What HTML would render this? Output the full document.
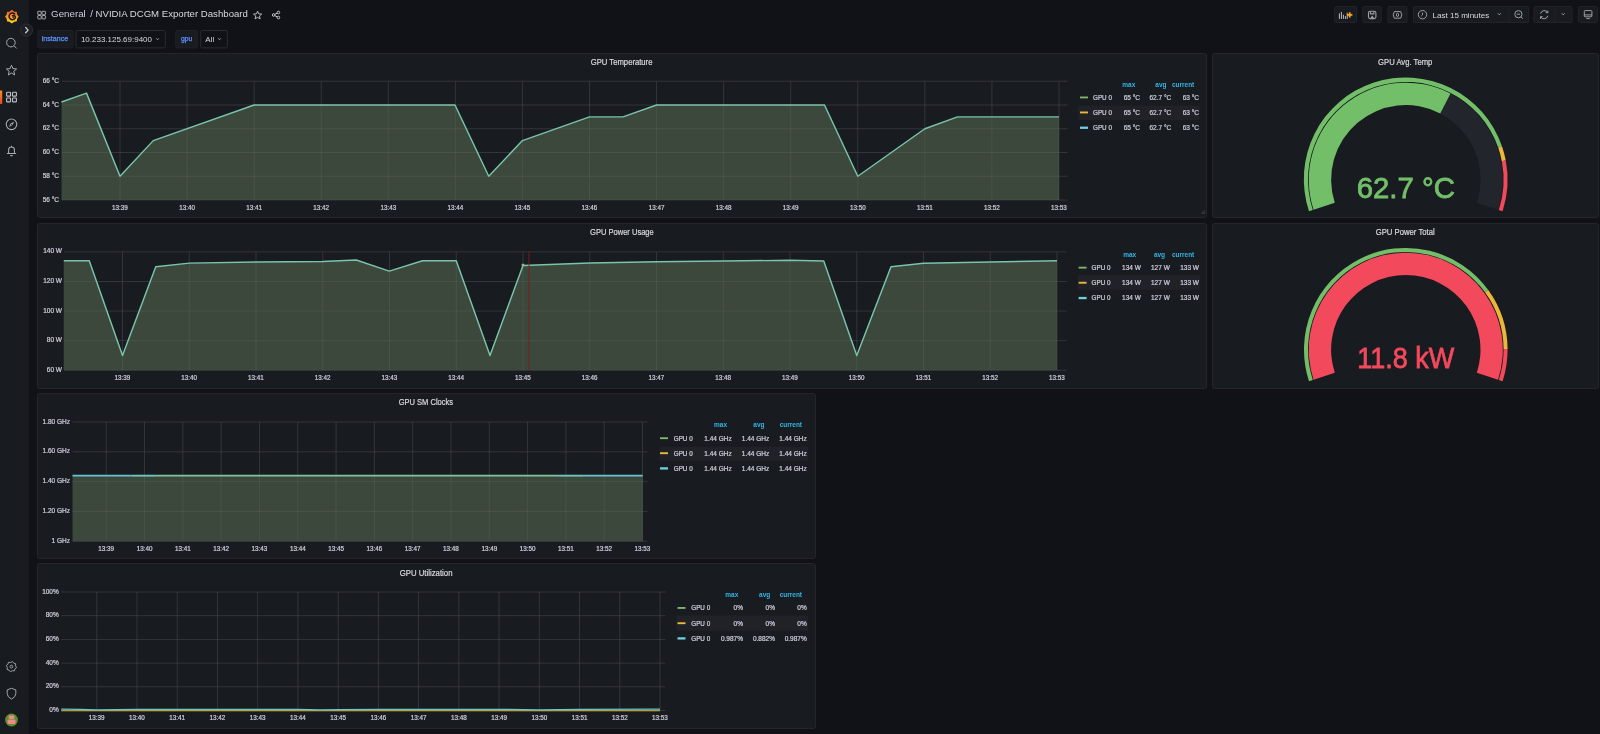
<!DOCTYPE html>
<html><head><meta charset="utf-8"><style>
html,body{margin:0;padding:0;width:1600px;height:734px;overflow:hidden;background:#111217;font-family:"Liberation Sans", sans-serif;}
</style></head><body>
<svg width="1600" height="734" viewBox="0 0 1600 734" style="position:absolute;left:0;top:0;will-change:transform" font-family='"Liberation Sans", sans-serif'><rect x="0" y="0" width="28" height="734" fill="#181b1f"/><line x1="28.5" y1="0" x2="28.5" y2="734" stroke="#16181c"/><rect x="37.5" y="53.5" width="1169" height="164" rx="2" fill="#181b1f" stroke="#24262b" stroke-width="1"/><text x="621.6" y="64.6" font-size="8.4" fill="#d8d9e0" text-anchor="middle" font-weight="normal" textLength="61.7" lengthAdjust="spacingAndGlyphs" stroke="#d8d9e0" stroke-width="0.2">GPU Temperature</text><rect x="1212.5" y="53.5" width="386" height="164" rx="2" fill="#181b1f" stroke="#24262b" stroke-width="1"/><text x="1405.2" y="64.8" font-size="8.4" fill="#d8d9e0" text-anchor="middle" font-weight="normal" textLength="54.3" lengthAdjust="spacingAndGlyphs" stroke="#d8d9e0" stroke-width="0.2">GPU Avg. Temp</text><rect x="37.5" y="223.5" width="1169" height="165" rx="2" fill="#181b1f" stroke="#24262b" stroke-width="1"/><text x="621.9" y="234.7" font-size="8.4" fill="#d8d9e0" text-anchor="middle" font-weight="normal" textLength="63.7" lengthAdjust="spacingAndGlyphs" stroke="#d8d9e0" stroke-width="0.2">GPU Power Usage</text><rect x="1212.5" y="223.5" width="386" height="165" rx="2" fill="#181b1f" stroke="#24262b" stroke-width="1"/><text x="1405.2" y="235" font-size="8.4" fill="#d8d9e0" text-anchor="middle" font-weight="normal" textLength="59" lengthAdjust="spacingAndGlyphs" stroke="#d8d9e0" stroke-width="0.2">GPU Power Total</text><rect x="37.5" y="393.5" width="778" height="165" rx="2" fill="#181b1f" stroke="#24262b" stroke-width="1"/><text x="425.9" y="405.4" font-size="8.4" fill="#d8d9e0" text-anchor="middle" font-weight="normal" textLength="54.4" lengthAdjust="spacingAndGlyphs" stroke="#d8d9e0" stroke-width="0.2">GPU SM Clocks</text><rect x="37.5" y="563.5" width="778" height="165" rx="2" fill="#181b1f" stroke="#24262b" stroke-width="1"/><text x="426.1" y="575.6" font-size="8.4" fill="#d8d9e0" text-anchor="middle" font-weight="normal" textLength="52.8" lengthAdjust="spacingAndGlyphs" stroke="#d8d9e0" stroke-width="0.2">GPU Utilization</text><path d="M1203.5,214 L1205,212.5 M1201.5,214 L1205,210.5" stroke="#6b6d75" stroke-width="0.6"/><line x1="62" y1="81.25" x2="1067.5" y2="81.25" stroke="#27292e" stroke-width="1"/><line x1="62" y1="105.0" x2="1067.5" y2="105.0" stroke="#27292e" stroke-width="1"/><line x1="62" y1="128.75" x2="1067.5" y2="128.75" stroke="#27292e" stroke-width="1"/><line x1="62" y1="152.5" x2="1067.5" y2="152.5" stroke="#27292e" stroke-width="1"/><line x1="62" y1="176.25" x2="1067.5" y2="176.25" stroke="#27292e" stroke-width="1"/><line x1="62" y1="200.0" x2="1067.5" y2="200.0" stroke="#27292e" stroke-width="1"/><line x1="120.0" y1="81.25" x2="120.0" y2="200.0" stroke="#27292e" stroke-width="1"/><line x1="187.07142857142856" y1="81.25" x2="187.07142857142856" y2="200.0" stroke="#27292e" stroke-width="1"/><line x1="254.14285714285714" y1="81.25" x2="254.14285714285714" y2="200.0" stroke="#27292e" stroke-width="1"/><line x1="321.2142857142857" y1="81.25" x2="321.2142857142857" y2="200.0" stroke="#27292e" stroke-width="1"/><line x1="388.2857142857143" y1="81.25" x2="388.2857142857143" y2="200.0" stroke="#27292e" stroke-width="1"/><line x1="455.35714285714283" y1="81.25" x2="455.35714285714283" y2="200.0" stroke="#27292e" stroke-width="1"/><line x1="522.4285714285714" y1="81.25" x2="522.4285714285714" y2="200.0" stroke="#27292e" stroke-width="1"/><line x1="589.5" y1="81.25" x2="589.5" y2="200.0" stroke="#27292e" stroke-width="1"/><line x1="656.5714285714286" y1="81.25" x2="656.5714285714286" y2="200.0" stroke="#27292e" stroke-width="1"/><line x1="723.6428571428571" y1="81.25" x2="723.6428571428571" y2="200.0" stroke="#27292e" stroke-width="1"/><line x1="790.7142857142857" y1="81.25" x2="790.7142857142857" y2="200.0" stroke="#27292e" stroke-width="1"/><line x1="857.7857142857142" y1="81.25" x2="857.7857142857142" y2="200.0" stroke="#27292e" stroke-width="1"/><line x1="924.8571428571429" y1="81.25" x2="924.8571428571429" y2="200.0" stroke="#27292e" stroke-width="1"/><line x1="991.9285714285714" y1="81.25" x2="991.9285714285714" y2="200.0" stroke="#27292e" stroke-width="1"/><line x1="1059.0" y1="81.25" x2="1059.0" y2="200.0" stroke="#27292e" stroke-width="1"/><polygon points="61.50,200.0 61.50,102.03 86.50,93.12 120.00,176.25 153.25,140.62 254.14,105.00 455.00,105.00 488.75,176.25 522.43,140.62 589.50,116.88 623.00,116.88 656.57,105.00 824.50,105.00 857.79,176.25 924.86,128.75 957.50,116.88 1059.00,116.88 1059.00,200.0" fill="#3d483c"/><line x1="62" y1="81.25" x2="1067.5" y2="81.25" stroke="rgba(204,204,220,0.08)" stroke-width="1"/><line x1="62" y1="105.0" x2="1067.5" y2="105.0" stroke="rgba(204,204,220,0.08)" stroke-width="1"/><line x1="62" y1="128.75" x2="1067.5" y2="128.75" stroke="rgba(204,204,220,0.08)" stroke-width="1"/><line x1="62" y1="152.5" x2="1067.5" y2="152.5" stroke="rgba(204,204,220,0.08)" stroke-width="1"/><line x1="62" y1="176.25" x2="1067.5" y2="176.25" stroke="rgba(204,204,220,0.08)" stroke-width="1"/><line x1="62" y1="200.0" x2="1067.5" y2="200.0" stroke="rgba(204,204,220,0.08)" stroke-width="1"/><line x1="120.0" y1="81.25" x2="120.0" y2="200.0" stroke="rgba(204,204,220,0.08)" stroke-width="1"/><line x1="187.07142857142856" y1="81.25" x2="187.07142857142856" y2="200.0" stroke="rgba(204,204,220,0.08)" stroke-width="1"/><line x1="254.14285714285714" y1="81.25" x2="254.14285714285714" y2="200.0" stroke="rgba(204,204,220,0.08)" stroke-width="1"/><line x1="321.2142857142857" y1="81.25" x2="321.2142857142857" y2="200.0" stroke="rgba(204,204,220,0.08)" stroke-width="1"/><line x1="388.2857142857143" y1="81.25" x2="388.2857142857143" y2="200.0" stroke="rgba(204,204,220,0.08)" stroke-width="1"/><line x1="455.35714285714283" y1="81.25" x2="455.35714285714283" y2="200.0" stroke="rgba(204,204,220,0.08)" stroke-width="1"/><line x1="522.4285714285714" y1="81.25" x2="522.4285714285714" y2="200.0" stroke="rgba(204,204,220,0.08)" stroke-width="1"/><line x1="589.5" y1="81.25" x2="589.5" y2="200.0" stroke="rgba(204,204,220,0.08)" stroke-width="1"/><line x1="656.5714285714286" y1="81.25" x2="656.5714285714286" y2="200.0" stroke="rgba(204,204,220,0.08)" stroke-width="1"/><line x1="723.6428571428571" y1="81.25" x2="723.6428571428571" y2="200.0" stroke="rgba(204,204,220,0.08)" stroke-width="1"/><line x1="790.7142857142857" y1="81.25" x2="790.7142857142857" y2="200.0" stroke="rgba(204,204,220,0.08)" stroke-width="1"/><line x1="857.7857142857142" y1="81.25" x2="857.7857142857142" y2="200.0" stroke="rgba(204,204,220,0.08)" stroke-width="1"/><line x1="924.8571428571429" y1="81.25" x2="924.8571428571429" y2="200.0" stroke="rgba(204,204,220,0.08)" stroke-width="1"/><line x1="991.9285714285714" y1="81.25" x2="991.9285714285714" y2="200.0" stroke="rgba(204,204,220,0.08)" stroke-width="1"/><line x1="1059.0" y1="81.25" x2="1059.0" y2="200.0" stroke="rgba(204,204,220,0.08)" stroke-width="1"/><polyline points="61.50,102.03 86.50,93.12 120.00,176.25 153.25,140.62 254.14,105.00 455.00,105.00 488.75,176.25 522.43,140.62 589.50,116.88 623.00,116.88 656.57,105.00 824.50,105.00 857.79,176.25 924.86,128.75 957.50,116.88 1059.00,116.88" fill="none" stroke="#79c4aa" stroke-width="1.45" stroke-linejoin="round"/><text x="59" y="82.75" font-size="6.5" fill="#ccccdc" text-anchor="end" font-weight="normal" stroke="#ccccdc" stroke-width="0.22">66 °C</text><text x="59" y="106.5" font-size="6.5" fill="#ccccdc" text-anchor="end" font-weight="normal" stroke="#ccccdc" stroke-width="0.22">64 °C</text><text x="59" y="130.25" font-size="6.5" fill="#ccccdc" text-anchor="end" font-weight="normal" stroke="#ccccdc" stroke-width="0.22">62 °C</text><text x="59" y="154.0" font-size="6.5" fill="#ccccdc" text-anchor="end" font-weight="normal" stroke="#ccccdc" stroke-width="0.22">60 °C</text><text x="59" y="177.75" font-size="6.5" fill="#ccccdc" text-anchor="end" font-weight="normal" stroke="#ccccdc" stroke-width="0.22">58 °C</text><text x="59" y="201.5" font-size="6.5" fill="#ccccdc" text-anchor="end" font-weight="normal" stroke="#ccccdc" stroke-width="0.22">56 °C</text><text x="120.0" y="209.8" font-size="6.3" fill="#ccccdc" text-anchor="middle" font-weight="normal" stroke="#ccccdc" stroke-width="0.22">13:39</text><text x="187.07142857142856" y="209.8" font-size="6.3" fill="#ccccdc" text-anchor="middle" font-weight="normal" stroke="#ccccdc" stroke-width="0.22">13:40</text><text x="254.14285714285714" y="209.8" font-size="6.3" fill="#ccccdc" text-anchor="middle" font-weight="normal" stroke="#ccccdc" stroke-width="0.22">13:41</text><text x="321.2142857142857" y="209.8" font-size="6.3" fill="#ccccdc" text-anchor="middle" font-weight="normal" stroke="#ccccdc" stroke-width="0.22">13:42</text><text x="388.2857142857143" y="209.8" font-size="6.3" fill="#ccccdc" text-anchor="middle" font-weight="normal" stroke="#ccccdc" stroke-width="0.22">13:43</text><text x="455.35714285714283" y="209.8" font-size="6.3" fill="#ccccdc" text-anchor="middle" font-weight="normal" stroke="#ccccdc" stroke-width="0.22">13:44</text><text x="522.4285714285714" y="209.8" font-size="6.3" fill="#ccccdc" text-anchor="middle" font-weight="normal" stroke="#ccccdc" stroke-width="0.22">13:45</text><text x="589.5" y="209.8" font-size="6.3" fill="#ccccdc" text-anchor="middle" font-weight="normal" stroke="#ccccdc" stroke-width="0.22">13:46</text><text x="656.5714285714286" y="209.8" font-size="6.3" fill="#ccccdc" text-anchor="middle" font-weight="normal" stroke="#ccccdc" stroke-width="0.22">13:47</text><text x="723.6428571428571" y="209.8" font-size="6.3" fill="#ccccdc" text-anchor="middle" font-weight="normal" stroke="#ccccdc" stroke-width="0.22">13:48</text><text x="790.7142857142857" y="209.8" font-size="6.3" fill="#ccccdc" text-anchor="middle" font-weight="normal" stroke="#ccccdc" stroke-width="0.22">13:49</text><text x="857.7857142857142" y="209.8" font-size="6.3" fill="#ccccdc" text-anchor="middle" font-weight="normal" stroke="#ccccdc" stroke-width="0.22">13:50</text><text x="924.8571428571429" y="209.8" font-size="6.3" fill="#ccccdc" text-anchor="middle" font-weight="normal" stroke="#ccccdc" stroke-width="0.22">13:51</text><text x="991.9285714285714" y="209.8" font-size="6.3" fill="#ccccdc" text-anchor="middle" font-weight="normal" stroke="#ccccdc" stroke-width="0.22">13:52</text><text x="1059.0" y="209.8" font-size="6.3" fill="#ccccdc" text-anchor="middle" font-weight="normal" stroke="#ccccdc" stroke-width="0.22">13:53</text><rect x="1078.5" y="105.6" width="121.0" height="14.400000000000006" fill="#202228"/><text x="1135.3" y="86.6" font-size="6.5" fill="#33b5e5" text-anchor="end" font-weight="bold" >max</text><text x="1166.5" y="86.6" font-size="6.5" fill="#33b5e5" text-anchor="end" font-weight="bold" >avg</text><text x="1194.3" y="86.6" font-size="6.5" fill="#33b5e5" text-anchor="end" font-weight="bold" >current</text><rect x="1080" y="96.5" width="8" height="1.9" fill="#7eb26d"/><text x="1093" y="99.8" font-size="6.3" fill="#ccccdc" text-anchor="start" font-weight="normal" stroke="#ccccdc" stroke-width="0.22">GPU 0</text><text x="1140" y="99.8" font-size="6.5" fill="#ccccdc" text-anchor="end" font-weight="normal" stroke="#ccccdc" stroke-width="0.22">65 °C</text><text x="1171.2" y="99.8" font-size="6.5" fill="#ccccdc" text-anchor="end" font-weight="normal" stroke="#ccccdc" stroke-width="0.22">62.7 °C</text><text x="1199" y="99.8" font-size="6.5" fill="#ccccdc" text-anchor="end" font-weight="normal" stroke="#ccccdc" stroke-width="0.22">63 °C</text><rect x="1080" y="111.5" width="8" height="1.9" fill="#eab839"/><text x="1093" y="114.8" font-size="6.3" fill="#ccccdc" text-anchor="start" font-weight="normal" stroke="#ccccdc" stroke-width="0.22">GPU 0</text><text x="1140" y="114.8" font-size="6.5" fill="#ccccdc" text-anchor="end" font-weight="normal" stroke="#ccccdc" stroke-width="0.22">65 °C</text><text x="1171.2" y="114.8" font-size="6.5" fill="#ccccdc" text-anchor="end" font-weight="normal" stroke="#ccccdc" stroke-width="0.22">62.7 °C</text><text x="1199" y="114.8" font-size="6.5" fill="#ccccdc" text-anchor="end" font-weight="normal" stroke="#ccccdc" stroke-width="0.22">63 °C</text><rect x="1080" y="126.6" width="8" height="2.3" fill="#6ed0e0"/><text x="1093" y="129.9" font-size="6.3" fill="#ccccdc" text-anchor="start" font-weight="normal" stroke="#ccccdc" stroke-width="0.22">GPU 0</text><text x="1140" y="129.9" font-size="6.5" fill="#ccccdc" text-anchor="end" font-weight="normal" stroke="#ccccdc" stroke-width="0.22">65 °C</text><text x="1171.2" y="129.9" font-size="6.5" fill="#ccccdc" text-anchor="end" font-weight="normal" stroke="#ccccdc" stroke-width="0.22">62.7 °C</text><text x="1199" y="129.9" font-size="6.5" fill="#ccccdc" text-anchor="end" font-weight="normal" stroke="#ccccdc" stroke-width="0.22">63 °C</text><line x1="63.75" y1="251.874" x2="1066.5" y2="251.874" stroke="#27292e" stroke-width="1"/><line x1="63.75" y1="281.468" x2="1066.5" y2="281.468" stroke="#27292e" stroke-width="1"/><line x1="63.75" y1="311.062" x2="1066.5" y2="311.062" stroke="#27292e" stroke-width="1"/><line x1="63.75" y1="340.656" x2="1066.5" y2="340.656" stroke="#27292e" stroke-width="1"/><line x1="63.75" y1="370.25" x2="1066.5" y2="370.25" stroke="#27292e" stroke-width="1"/><line x1="122.5" y1="251.874" x2="122.5" y2="370.25" stroke="#27292e" stroke-width="1"/><line x1="189.25" y1="251.874" x2="189.25" y2="370.25" stroke="#27292e" stroke-width="1"/><line x1="256.0" y1="251.874" x2="256.0" y2="370.25" stroke="#27292e" stroke-width="1"/><line x1="322.75" y1="251.874" x2="322.75" y2="370.25" stroke="#27292e" stroke-width="1"/><line x1="389.5" y1="251.874" x2="389.5" y2="370.25" stroke="#27292e" stroke-width="1"/><line x1="456.25" y1="251.874" x2="456.25" y2="370.25" stroke="#27292e" stroke-width="1"/><line x1="523.0" y1="251.874" x2="523.0" y2="370.25" stroke="#27292e" stroke-width="1"/><line x1="589.75" y1="251.874" x2="589.75" y2="370.25" stroke="#27292e" stroke-width="1"/><line x1="656.5" y1="251.874" x2="656.5" y2="370.25" stroke="#27292e" stroke-width="1"/><line x1="723.25" y1="251.874" x2="723.25" y2="370.25" stroke="#27292e" stroke-width="1"/><line x1="790.0" y1="251.874" x2="790.0" y2="370.25" stroke="#27292e" stroke-width="1"/><line x1="856.75" y1="251.874" x2="856.75" y2="370.25" stroke="#27292e" stroke-width="1"/><line x1="923.5" y1="251.874" x2="923.5" y2="370.25" stroke="#27292e" stroke-width="1"/><line x1="990.25" y1="251.874" x2="990.25" y2="370.25" stroke="#27292e" stroke-width="1"/><line x1="1057.0" y1="251.874" x2="1057.0" y2="370.25" stroke="#27292e" stroke-width="1"/><polygon points="63.75,370.25 63.75,260.75 89.25,260.75 122.50,355.45 155.75,266.67 189.25,263.12 256.00,261.94 322.75,261.49 356.25,260.01 389.25,271.11 422.50,260.75 456.25,260.75 490.00,355.45 523.00,265.49 589.75,262.97 656.50,261.79 723.25,261.05 790.00,260.31 823.75,261.05 856.75,355.45 891.00,266.67 923.50,263.27 990.25,261.94 1057.00,260.75 1057.00,370.25" fill="#3d483c"/><line x1="63.75" y1="251.874" x2="1066.5" y2="251.874" stroke="rgba(204,204,220,0.08)" stroke-width="1"/><line x1="63.75" y1="281.468" x2="1066.5" y2="281.468" stroke="rgba(204,204,220,0.08)" stroke-width="1"/><line x1="63.75" y1="311.062" x2="1066.5" y2="311.062" stroke="rgba(204,204,220,0.08)" stroke-width="1"/><line x1="63.75" y1="340.656" x2="1066.5" y2="340.656" stroke="rgba(204,204,220,0.08)" stroke-width="1"/><line x1="63.75" y1="370.25" x2="1066.5" y2="370.25" stroke="rgba(204,204,220,0.08)" stroke-width="1"/><line x1="122.5" y1="251.874" x2="122.5" y2="370.25" stroke="rgba(204,204,220,0.08)" stroke-width="1"/><line x1="189.25" y1="251.874" x2="189.25" y2="370.25" stroke="rgba(204,204,220,0.08)" stroke-width="1"/><line x1="256.0" y1="251.874" x2="256.0" y2="370.25" stroke="rgba(204,204,220,0.08)" stroke-width="1"/><line x1="322.75" y1="251.874" x2="322.75" y2="370.25" stroke="rgba(204,204,220,0.08)" stroke-width="1"/><line x1="389.5" y1="251.874" x2="389.5" y2="370.25" stroke="rgba(204,204,220,0.08)" stroke-width="1"/><line x1="456.25" y1="251.874" x2="456.25" y2="370.25" stroke="rgba(204,204,220,0.08)" stroke-width="1"/><line x1="523.0" y1="251.874" x2="523.0" y2="370.25" stroke="rgba(204,204,220,0.08)" stroke-width="1"/><line x1="589.75" y1="251.874" x2="589.75" y2="370.25" stroke="rgba(204,204,220,0.08)" stroke-width="1"/><line x1="656.5" y1="251.874" x2="656.5" y2="370.25" stroke="rgba(204,204,220,0.08)" stroke-width="1"/><line x1="723.25" y1="251.874" x2="723.25" y2="370.25" stroke="rgba(204,204,220,0.08)" stroke-width="1"/><line x1="790.0" y1="251.874" x2="790.0" y2="370.25" stroke="rgba(204,204,220,0.08)" stroke-width="1"/><line x1="856.75" y1="251.874" x2="856.75" y2="370.25" stroke="rgba(204,204,220,0.08)" stroke-width="1"/><line x1="923.5" y1="251.874" x2="923.5" y2="370.25" stroke="rgba(204,204,220,0.08)" stroke-width="1"/><line x1="990.25" y1="251.874" x2="990.25" y2="370.25" stroke="rgba(204,204,220,0.08)" stroke-width="1"/><line x1="1057.0" y1="251.874" x2="1057.0" y2="370.25" stroke="rgba(204,204,220,0.08)" stroke-width="1"/><polyline points="63.75,260.75 89.25,260.75 122.50,355.45 155.75,266.67 189.25,263.12 256.00,261.94 322.75,261.49 356.25,260.01 389.25,271.11 422.50,260.75 456.25,260.75 490.00,355.45 523.00,265.49 589.75,262.97 656.50,261.79 723.25,261.05 790.00,260.31 823.75,261.05 856.75,355.45 891.00,266.67 923.50,263.27 990.25,261.94 1057.00,260.75" fill="none" stroke="#79c4aa" stroke-width="1.45" stroke-linejoin="round"/><text x="62" y="253.374" font-size="6.5" fill="#ccccdc" text-anchor="end" font-weight="normal" stroke="#ccccdc" stroke-width="0.22">140 W</text><text x="62" y="282.968" font-size="6.5" fill="#ccccdc" text-anchor="end" font-weight="normal" stroke="#ccccdc" stroke-width="0.22">120 W</text><text x="62" y="312.562" font-size="6.5" fill="#ccccdc" text-anchor="end" font-weight="normal" stroke="#ccccdc" stroke-width="0.22">100 W</text><text x="62" y="342.156" font-size="6.5" fill="#ccccdc" text-anchor="end" font-weight="normal" stroke="#ccccdc" stroke-width="0.22">80 W</text><text x="62" y="371.75" font-size="6.5" fill="#ccccdc" text-anchor="end" font-weight="normal" stroke="#ccccdc" stroke-width="0.22">60 W</text><text x="122.5" y="379.8" font-size="6.3" fill="#ccccdc" text-anchor="middle" font-weight="normal" stroke="#ccccdc" stroke-width="0.22">13:39</text><text x="189.25" y="379.8" font-size="6.3" fill="#ccccdc" text-anchor="middle" font-weight="normal" stroke="#ccccdc" stroke-width="0.22">13:40</text><text x="256.0" y="379.8" font-size="6.3" fill="#ccccdc" text-anchor="middle" font-weight="normal" stroke="#ccccdc" stroke-width="0.22">13:41</text><text x="322.75" y="379.8" font-size="6.3" fill="#ccccdc" text-anchor="middle" font-weight="normal" stroke="#ccccdc" stroke-width="0.22">13:42</text><text x="389.5" y="379.8" font-size="6.3" fill="#ccccdc" text-anchor="middle" font-weight="normal" stroke="#ccccdc" stroke-width="0.22">13:43</text><text x="456.25" y="379.8" font-size="6.3" fill="#ccccdc" text-anchor="middle" font-weight="normal" stroke="#ccccdc" stroke-width="0.22">13:44</text><text x="523.0" y="379.8" font-size="6.3" fill="#ccccdc" text-anchor="middle" font-weight="normal" stroke="#ccccdc" stroke-width="0.22">13:45</text><text x="589.75" y="379.8" font-size="6.3" fill="#ccccdc" text-anchor="middle" font-weight="normal" stroke="#ccccdc" stroke-width="0.22">13:46</text><text x="656.5" y="379.8" font-size="6.3" fill="#ccccdc" text-anchor="middle" font-weight="normal" stroke="#ccccdc" stroke-width="0.22">13:47</text><text x="723.25" y="379.8" font-size="6.3" fill="#ccccdc" text-anchor="middle" font-weight="normal" stroke="#ccccdc" stroke-width="0.22">13:48</text><text x="790.0" y="379.8" font-size="6.3" fill="#ccccdc" text-anchor="middle" font-weight="normal" stroke="#ccccdc" stroke-width="0.22">13:49</text><text x="856.75" y="379.8" font-size="6.3" fill="#ccccdc" text-anchor="middle" font-weight="normal" stroke="#ccccdc" stroke-width="0.22">13:50</text><text x="923.5" y="379.8" font-size="6.3" fill="#ccccdc" text-anchor="middle" font-weight="normal" stroke="#ccccdc" stroke-width="0.22">13:51</text><text x="990.25" y="379.8" font-size="6.3" fill="#ccccdc" text-anchor="middle" font-weight="normal" stroke="#ccccdc" stroke-width="0.22">13:52</text><text x="1057.0" y="379.8" font-size="6.3" fill="#ccccdc" text-anchor="middle" font-weight="normal" stroke="#ccccdc" stroke-width="0.22">13:53</text><line x1="529" y1="251" x2="529" y2="370" stroke="#7a1c22" stroke-width="0.9"/><circle cx="523" cy="265" r="1.5" fill="#8fb88a"/><rect x="1078" y="275" width="121.79999999999995" height="14.699999999999989" fill="#202228"/><text x="1136.2" y="256.9" font-size="6.5" fill="#33b5e5" text-anchor="end" font-weight="bold" >max</text><text x="1165.1" y="256.9" font-size="6.5" fill="#33b5e5" text-anchor="end" font-weight="bold" >avg</text><text x="1194.3" y="256.9" font-size="6.5" fill="#33b5e5" text-anchor="end" font-weight="bold" >current</text><rect x="1078.6" y="266.7" width="8" height="1.9" fill="#7eb26d"/><text x="1091.6" y="270.0" font-size="6.3" fill="#ccccdc" text-anchor="start" font-weight="normal" stroke="#ccccdc" stroke-width="0.22">GPU 0</text><text x="1140.9" y="270.0" font-size="6.5" fill="#ccccdc" text-anchor="end" font-weight="normal" stroke="#ccccdc" stroke-width="0.22">134 W</text><text x="1169.8" y="270.0" font-size="6.5" fill="#ccccdc" text-anchor="end" font-weight="normal" stroke="#ccccdc" stroke-width="0.22">127 W</text><text x="1199" y="270.0" font-size="6.5" fill="#ccccdc" text-anchor="end" font-weight="normal" stroke="#ccccdc" stroke-width="0.22">133 W</text><rect x="1078.6" y="281.8" width="8" height="1.9" fill="#eab839"/><text x="1091.6" y="285.1" font-size="6.3" fill="#ccccdc" text-anchor="start" font-weight="normal" stroke="#ccccdc" stroke-width="0.22">GPU 0</text><text x="1140.9" y="285.1" font-size="6.5" fill="#ccccdc" text-anchor="end" font-weight="normal" stroke="#ccccdc" stroke-width="0.22">134 W</text><text x="1169.8" y="285.1" font-size="6.5" fill="#ccccdc" text-anchor="end" font-weight="normal" stroke="#ccccdc" stroke-width="0.22">127 W</text><text x="1199" y="285.1" font-size="6.5" fill="#ccccdc" text-anchor="end" font-weight="normal" stroke="#ccccdc" stroke-width="0.22">133 W</text><rect x="1078.6" y="296.9" width="8" height="2.3" fill="#6ed0e0"/><text x="1091.6" y="300.2" font-size="6.3" fill="#ccccdc" text-anchor="start" font-weight="normal" stroke="#ccccdc" stroke-width="0.22">GPU 0</text><text x="1140.9" y="300.2" font-size="6.5" fill="#ccccdc" text-anchor="end" font-weight="normal" stroke="#ccccdc" stroke-width="0.22">134 W</text><text x="1169.8" y="300.2" font-size="6.5" fill="#ccccdc" text-anchor="end" font-weight="normal" stroke="#ccccdc" stroke-width="0.22">127 W</text><text x="1199" y="300.2" font-size="6.5" fill="#ccccdc" text-anchor="end" font-weight="normal" stroke="#ccccdc" stroke-width="0.22">133 W</text><line x1="72.5" y1="422.002" x2="647.5" y2="422.002" stroke="#27292e" stroke-width="1"/><line x1="72.5" y1="451.81399999999996" x2="647.5" y2="451.81399999999996" stroke="#27292e" stroke-width="1"/><line x1="72.5" y1="481.62600000000003" x2="647.5" y2="481.62600000000003" stroke="#27292e" stroke-width="1"/><line x1="72.5" y1="511.438" x2="647.5" y2="511.438" stroke="#27292e" stroke-width="1"/><line x1="72.5" y1="541.25" x2="647.5" y2="541.25" stroke="#27292e" stroke-width="1"/><line x1="106.25" y1="422.002" x2="106.25" y2="541.25" stroke="#27292e" stroke-width="1"/><line x1="144.55357142857144" y1="422.002" x2="144.55357142857144" y2="541.25" stroke="#27292e" stroke-width="1"/><line x1="182.85714285714286" y1="422.002" x2="182.85714285714286" y2="541.25" stroke="#27292e" stroke-width="1"/><line x1="221.16071428571428" y1="422.002" x2="221.16071428571428" y2="541.25" stroke="#27292e" stroke-width="1"/><line x1="259.4642857142857" y1="422.002" x2="259.4642857142857" y2="541.25" stroke="#27292e" stroke-width="1"/><line x1="297.76785714285717" y1="422.002" x2="297.76785714285717" y2="541.25" stroke="#27292e" stroke-width="1"/><line x1="336.07142857142856" y1="422.002" x2="336.07142857142856" y2="541.25" stroke="#27292e" stroke-width="1"/><line x1="374.375" y1="422.002" x2="374.375" y2="541.25" stroke="#27292e" stroke-width="1"/><line x1="412.67857142857144" y1="422.002" x2="412.67857142857144" y2="541.25" stroke="#27292e" stroke-width="1"/><line x1="450.9821428571429" y1="422.002" x2="450.9821428571429" y2="541.25" stroke="#27292e" stroke-width="1"/><line x1="489.28571428571433" y1="422.002" x2="489.28571428571433" y2="541.25" stroke="#27292e" stroke-width="1"/><line x1="527.5892857142858" y1="422.002" x2="527.5892857142858" y2="541.25" stroke="#27292e" stroke-width="1"/><line x1="565.8928571428571" y1="422.002" x2="565.8928571428571" y2="541.25" stroke="#27292e" stroke-width="1"/><line x1="604.1964285714287" y1="422.002" x2="604.1964285714287" y2="541.25" stroke="#27292e" stroke-width="1"/><line x1="642.5" y1="422.002" x2="642.5" y2="541.25" stroke="#27292e" stroke-width="1"/><polygon points="72.50,541.25 72.50,475.66 642.75,475.66 642.75,541.25" fill="#3d483c"/><line x1="72.5" y1="422.002" x2="647.5" y2="422.002" stroke="rgba(204,204,220,0.08)" stroke-width="1"/><line x1="72.5" y1="451.81399999999996" x2="647.5" y2="451.81399999999996" stroke="rgba(204,204,220,0.08)" stroke-width="1"/><line x1="72.5" y1="481.62600000000003" x2="647.5" y2="481.62600000000003" stroke="rgba(204,204,220,0.08)" stroke-width="1"/><line x1="72.5" y1="511.438" x2="647.5" y2="511.438" stroke="rgba(204,204,220,0.08)" stroke-width="1"/><line x1="72.5" y1="541.25" x2="647.5" y2="541.25" stroke="rgba(204,204,220,0.08)" stroke-width="1"/><line x1="106.25" y1="422.002" x2="106.25" y2="541.25" stroke="rgba(204,204,220,0.08)" stroke-width="1"/><line x1="144.55357142857144" y1="422.002" x2="144.55357142857144" y2="541.25" stroke="rgba(204,204,220,0.08)" stroke-width="1"/><line x1="182.85714285714286" y1="422.002" x2="182.85714285714286" y2="541.25" stroke="rgba(204,204,220,0.08)" stroke-width="1"/><line x1="221.16071428571428" y1="422.002" x2="221.16071428571428" y2="541.25" stroke="rgba(204,204,220,0.08)" stroke-width="1"/><line x1="259.4642857142857" y1="422.002" x2="259.4642857142857" y2="541.25" stroke="rgba(204,204,220,0.08)" stroke-width="1"/><line x1="297.76785714285717" y1="422.002" x2="297.76785714285717" y2="541.25" stroke="rgba(204,204,220,0.08)" stroke-width="1"/><line x1="336.07142857142856" y1="422.002" x2="336.07142857142856" y2="541.25" stroke="rgba(204,204,220,0.08)" stroke-width="1"/><line x1="374.375" y1="422.002" x2="374.375" y2="541.25" stroke="rgba(204,204,220,0.08)" stroke-width="1"/><line x1="412.67857142857144" y1="422.002" x2="412.67857142857144" y2="541.25" stroke="rgba(204,204,220,0.08)" stroke-width="1"/><line x1="450.9821428571429" y1="422.002" x2="450.9821428571429" y2="541.25" stroke="rgba(204,204,220,0.08)" stroke-width="1"/><line x1="489.28571428571433" y1="422.002" x2="489.28571428571433" y2="541.25" stroke="rgba(204,204,220,0.08)" stroke-width="1"/><line x1="527.5892857142858" y1="422.002" x2="527.5892857142858" y2="541.25" stroke="rgba(204,204,220,0.08)" stroke-width="1"/><line x1="565.8928571428571" y1="422.002" x2="565.8928571428571" y2="541.25" stroke="rgba(204,204,220,0.08)" stroke-width="1"/><line x1="604.1964285714287" y1="422.002" x2="604.1964285714287" y2="541.25" stroke="rgba(204,204,220,0.08)" stroke-width="1"/><line x1="642.5" y1="422.002" x2="642.5" y2="541.25" stroke="rgba(204,204,220,0.08)" stroke-width="1"/><text x="70" y="423.502" font-size="6.5" fill="#ccccdc" text-anchor="end" font-weight="normal" stroke="#ccccdc" stroke-width="0.22">1.80 GHz</text><text x="70" y="453.31399999999996" font-size="6.5" fill="#ccccdc" text-anchor="end" font-weight="normal" stroke="#ccccdc" stroke-width="0.22">1.60 GHz</text><text x="70" y="483.12600000000003" font-size="6.5" fill="#ccccdc" text-anchor="end" font-weight="normal" stroke="#ccccdc" stroke-width="0.22">1.40 GHz</text><text x="70" y="512.938" font-size="6.5" fill="#ccccdc" text-anchor="end" font-weight="normal" stroke="#ccccdc" stroke-width="0.22">1.20 GHz</text><text x="70" y="542.75" font-size="6.5" fill="#ccccdc" text-anchor="end" font-weight="normal" stroke="#ccccdc" stroke-width="0.22">1 GHz</text><text x="106.25" y="551.1999999999999" font-size="6.3" fill="#ccccdc" text-anchor="middle" font-weight="normal" stroke="#ccccdc" stroke-width="0.22">13:39</text><text x="144.55357142857144" y="551.1999999999999" font-size="6.3" fill="#ccccdc" text-anchor="middle" font-weight="normal" stroke="#ccccdc" stroke-width="0.22">13:40</text><text x="182.85714285714286" y="551.1999999999999" font-size="6.3" fill="#ccccdc" text-anchor="middle" font-weight="normal" stroke="#ccccdc" stroke-width="0.22">13:41</text><text x="221.16071428571428" y="551.1999999999999" font-size="6.3" fill="#ccccdc" text-anchor="middle" font-weight="normal" stroke="#ccccdc" stroke-width="0.22">13:42</text><text x="259.4642857142857" y="551.1999999999999" font-size="6.3" fill="#ccccdc" text-anchor="middle" font-weight="normal" stroke="#ccccdc" stroke-width="0.22">13:43</text><text x="297.76785714285717" y="551.1999999999999" font-size="6.3" fill="#ccccdc" text-anchor="middle" font-weight="normal" stroke="#ccccdc" stroke-width="0.22">13:44</text><text x="336.07142857142856" y="551.1999999999999" font-size="6.3" fill="#ccccdc" text-anchor="middle" font-weight="normal" stroke="#ccccdc" stroke-width="0.22">13:45</text><text x="374.375" y="551.1999999999999" font-size="6.3" fill="#ccccdc" text-anchor="middle" font-weight="normal" stroke="#ccccdc" stroke-width="0.22">13:46</text><text x="412.67857142857144" y="551.1999999999999" font-size="6.3" fill="#ccccdc" text-anchor="middle" font-weight="normal" stroke="#ccccdc" stroke-width="0.22">13:47</text><text x="450.9821428571429" y="551.1999999999999" font-size="6.3" fill="#ccccdc" text-anchor="middle" font-weight="normal" stroke="#ccccdc" stroke-width="0.22">13:48</text><text x="489.28571428571433" y="551.1999999999999" font-size="6.3" fill="#ccccdc" text-anchor="middle" font-weight="normal" stroke="#ccccdc" stroke-width="0.22">13:49</text><text x="527.5892857142858" y="551.1999999999999" font-size="6.3" fill="#ccccdc" text-anchor="middle" font-weight="normal" stroke="#ccccdc" stroke-width="0.22">13:50</text><text x="565.8928571428571" y="551.1999999999999" font-size="6.3" fill="#ccccdc" text-anchor="middle" font-weight="normal" stroke="#ccccdc" stroke-width="0.22">13:51</text><text x="604.1964285714287" y="551.1999999999999" font-size="6.3" fill="#ccccdc" text-anchor="middle" font-weight="normal" stroke="#ccccdc" stroke-width="0.22">13:52</text><text x="642.5" y="551.1999999999999" font-size="6.3" fill="#ccccdc" text-anchor="middle" font-weight="normal" stroke="#ccccdc" stroke-width="0.22">13:53</text><g stroke-width="1.9"><line x1="72.5" y1="475.6636" x2="131.7" y2="475.6636" stroke="#66c4d6"/><line x1="131.7" y1="475.6636" x2="155.8" y2="475.6636" stroke="#70c4bb"/><line x1="155.8" y1="475.6636" x2="558.9" y2="475.6636" stroke="#7fc59c"/><line x1="558.9" y1="475.6636" x2="583.9" y2="475.6636" stroke="#70c4bb"/><line x1="583.9" y1="475.6636" x2="642.75" y2="475.6636" stroke="#66c4d6"/></g><rect x="659.5" y="446.75" width="148.5" height="14.0" fill="#202228"/><text x="727.05" y="427.3" font-size="6.5" fill="#33b5e5" text-anchor="end" font-weight="bold" >max</text><text x="764.55" y="427.3" font-size="6.5" fill="#33b5e5" text-anchor="end" font-weight="bold" >avg</text><text x="802.05" y="427.3" font-size="6.5" fill="#33b5e5" text-anchor="end" font-weight="bold" >current</text><rect x="660" y="437.25" width="8" height="1.9" fill="#7eb26d"/><text x="673.75" y="440.55" font-size="6.3" fill="#ccccdc" text-anchor="start" font-weight="normal" stroke="#ccccdc" stroke-width="0.22">GPU 0</text><text x="731.75" y="440.55" font-size="6.5" fill="#ccccdc" text-anchor="end" font-weight="normal" stroke="#ccccdc" stroke-width="0.22">1.44 GHz</text><text x="769.25" y="440.55" font-size="6.5" fill="#ccccdc" text-anchor="end" font-weight="normal" stroke="#ccccdc" stroke-width="0.22">1.44 GHz</text><text x="806.75" y="440.55" font-size="6.5" fill="#ccccdc" text-anchor="end" font-weight="normal" stroke="#ccccdc" stroke-width="0.22">1.44 GHz</text><rect x="660" y="452.25" width="8" height="1.9" fill="#eab839"/><text x="673.75" y="455.55" font-size="6.3" fill="#ccccdc" text-anchor="start" font-weight="normal" stroke="#ccccdc" stroke-width="0.22">GPU 0</text><text x="731.75" y="455.55" font-size="6.5" fill="#ccccdc" text-anchor="end" font-weight="normal" stroke="#ccccdc" stroke-width="0.22">1.44 GHz</text><text x="769.25" y="455.55" font-size="6.5" fill="#ccccdc" text-anchor="end" font-weight="normal" stroke="#ccccdc" stroke-width="0.22">1.44 GHz</text><text x="806.75" y="455.55" font-size="6.5" fill="#ccccdc" text-anchor="end" font-weight="normal" stroke="#ccccdc" stroke-width="0.22">1.44 GHz</text><rect x="660" y="467.25" width="8" height="2.3" fill="#6ed0e0"/><text x="673.75" y="470.55" font-size="6.3" fill="#ccccdc" text-anchor="start" font-weight="normal" stroke="#ccccdc" stroke-width="0.22">GPU 0</text><text x="731.75" y="470.55" font-size="6.5" fill="#ccccdc" text-anchor="end" font-weight="normal" stroke="#ccccdc" stroke-width="0.22">1.44 GHz</text><text x="769.25" y="470.55" font-size="6.5" fill="#ccccdc" text-anchor="end" font-weight="normal" stroke="#ccccdc" stroke-width="0.22">1.44 GHz</text><text x="806.75" y="470.55" font-size="6.5" fill="#ccccdc" text-anchor="end" font-weight="normal" stroke="#ccccdc" stroke-width="0.22">1.44 GHz</text><line x1="61.25" y1="592.0" x2="665.5" y2="592.0" stroke="#27292e" stroke-width="1"/><line x1="61.25" y1="615.7" x2="665.5" y2="615.7" stroke="#27292e" stroke-width="1"/><line x1="61.25" y1="639.4" x2="665.5" y2="639.4" stroke="#27292e" stroke-width="1"/><line x1="61.25" y1="663.1" x2="665.5" y2="663.1" stroke="#27292e" stroke-width="1"/><line x1="61.25" y1="686.8" x2="665.5" y2="686.8" stroke="#27292e" stroke-width="1"/><line x1="61.25" y1="710.5" x2="665.5" y2="710.5" stroke="#27292e" stroke-width="1"/><line x1="96.75" y1="592.0" x2="96.75" y2="710.5" stroke="#27292e" stroke-width="1"/><line x1="136.98214285714286" y1="592.0" x2="136.98214285714286" y2="710.5" stroke="#27292e" stroke-width="1"/><line x1="177.21428571428572" y1="592.0" x2="177.21428571428572" y2="710.5" stroke="#27292e" stroke-width="1"/><line x1="217.44642857142856" y1="592.0" x2="217.44642857142856" y2="710.5" stroke="#27292e" stroke-width="1"/><line x1="257.67857142857144" y1="592.0" x2="257.67857142857144" y2="710.5" stroke="#27292e" stroke-width="1"/><line x1="297.9107142857143" y1="592.0" x2="297.9107142857143" y2="710.5" stroke="#27292e" stroke-width="1"/><line x1="338.1428571428571" y1="592.0" x2="338.1428571428571" y2="710.5" stroke="#27292e" stroke-width="1"/><line x1="378.375" y1="592.0" x2="378.375" y2="710.5" stroke="#27292e" stroke-width="1"/><line x1="418.60714285714283" y1="592.0" x2="418.60714285714283" y2="710.5" stroke="#27292e" stroke-width="1"/><line x1="458.83928571428567" y1="592.0" x2="458.83928571428567" y2="710.5" stroke="#27292e" stroke-width="1"/><line x1="499.07142857142856" y1="592.0" x2="499.07142857142856" y2="710.5" stroke="#27292e" stroke-width="1"/><line x1="539.3035714285713" y1="592.0" x2="539.3035714285713" y2="710.5" stroke="#27292e" stroke-width="1"/><line x1="579.5357142857142" y1="592.0" x2="579.5357142857142" y2="710.5" stroke="#27292e" stroke-width="1"/><line x1="619.7678571428571" y1="592.0" x2="619.7678571428571" y2="710.5" stroke="#27292e" stroke-width="1"/><line x1="660.0" y1="592.0" x2="660.0" y2="710.5" stroke="#27292e" stroke-width="1"/><polygon points="61.25,710.5 61.25,710.50 660.00,710.50 660.00,710.5" fill="#3d483c"/><line x1="61.25" y1="592.0" x2="665.5" y2="592.0" stroke="rgba(204,204,220,0.08)" stroke-width="1"/><line x1="61.25" y1="615.7" x2="665.5" y2="615.7" stroke="rgba(204,204,220,0.08)" stroke-width="1"/><line x1="61.25" y1="639.4" x2="665.5" y2="639.4" stroke="rgba(204,204,220,0.08)" stroke-width="1"/><line x1="61.25" y1="663.1" x2="665.5" y2="663.1" stroke="rgba(204,204,220,0.08)" stroke-width="1"/><line x1="61.25" y1="686.8" x2="665.5" y2="686.8" stroke="rgba(204,204,220,0.08)" stroke-width="1"/><line x1="61.25" y1="710.5" x2="665.5" y2="710.5" stroke="rgba(204,204,220,0.08)" stroke-width="1"/><line x1="96.75" y1="592.0" x2="96.75" y2="710.5" stroke="rgba(204,204,220,0.08)" stroke-width="1"/><line x1="136.98214285714286" y1="592.0" x2="136.98214285714286" y2="710.5" stroke="rgba(204,204,220,0.08)" stroke-width="1"/><line x1="177.21428571428572" y1="592.0" x2="177.21428571428572" y2="710.5" stroke="rgba(204,204,220,0.08)" stroke-width="1"/><line x1="217.44642857142856" y1="592.0" x2="217.44642857142856" y2="710.5" stroke="rgba(204,204,220,0.08)" stroke-width="1"/><line x1="257.67857142857144" y1="592.0" x2="257.67857142857144" y2="710.5" stroke="rgba(204,204,220,0.08)" stroke-width="1"/><line x1="297.9107142857143" y1="592.0" x2="297.9107142857143" y2="710.5" stroke="rgba(204,204,220,0.08)" stroke-width="1"/><line x1="338.1428571428571" y1="592.0" x2="338.1428571428571" y2="710.5" stroke="rgba(204,204,220,0.08)" stroke-width="1"/><line x1="378.375" y1="592.0" x2="378.375" y2="710.5" stroke="rgba(204,204,220,0.08)" stroke-width="1"/><line x1="418.60714285714283" y1="592.0" x2="418.60714285714283" y2="710.5" stroke="rgba(204,204,220,0.08)" stroke-width="1"/><line x1="458.83928571428567" y1="592.0" x2="458.83928571428567" y2="710.5" stroke="rgba(204,204,220,0.08)" stroke-width="1"/><line x1="499.07142857142856" y1="592.0" x2="499.07142857142856" y2="710.5" stroke="rgba(204,204,220,0.08)" stroke-width="1"/><line x1="539.3035714285713" y1="592.0" x2="539.3035714285713" y2="710.5" stroke="rgba(204,204,220,0.08)" stroke-width="1"/><line x1="579.5357142857142" y1="592.0" x2="579.5357142857142" y2="710.5" stroke="rgba(204,204,220,0.08)" stroke-width="1"/><line x1="619.7678571428571" y1="592.0" x2="619.7678571428571" y2="710.5" stroke="rgba(204,204,220,0.08)" stroke-width="1"/><line x1="660.0" y1="592.0" x2="660.0" y2="710.5" stroke="rgba(204,204,220,0.08)" stroke-width="1"/><text x="58.75" y="593.5" font-size="6.5" fill="#ccccdc" text-anchor="end" font-weight="normal" stroke="#ccccdc" stroke-width="0.22">100%</text><text x="58.75" y="617.2" font-size="6.5" fill="#ccccdc" text-anchor="end" font-weight="normal" stroke="#ccccdc" stroke-width="0.22">80%</text><text x="58.75" y="640.9" font-size="6.5" fill="#ccccdc" text-anchor="end" font-weight="normal" stroke="#ccccdc" stroke-width="0.22">60%</text><text x="58.75" y="664.6" font-size="6.5" fill="#ccccdc" text-anchor="end" font-weight="normal" stroke="#ccccdc" stroke-width="0.22">40%</text><text x="58.75" y="688.3" font-size="6.5" fill="#ccccdc" text-anchor="end" font-weight="normal" stroke="#ccccdc" stroke-width="0.22">20%</text><text x="58.75" y="712.0" font-size="6.5" fill="#ccccdc" text-anchor="end" font-weight="normal" stroke="#ccccdc" stroke-width="0.22">0%</text><text x="96.75" y="720.1999999999999" font-size="6.3" fill="#ccccdc" text-anchor="middle" font-weight="normal" stroke="#ccccdc" stroke-width="0.22">13:39</text><text x="136.98214285714286" y="720.1999999999999" font-size="6.3" fill="#ccccdc" text-anchor="middle" font-weight="normal" stroke="#ccccdc" stroke-width="0.22">13:40</text><text x="177.21428571428572" y="720.1999999999999" font-size="6.3" fill="#ccccdc" text-anchor="middle" font-weight="normal" stroke="#ccccdc" stroke-width="0.22">13:41</text><text x="217.44642857142856" y="720.1999999999999" font-size="6.3" fill="#ccccdc" text-anchor="middle" font-weight="normal" stroke="#ccccdc" stroke-width="0.22">13:42</text><text x="257.67857142857144" y="720.1999999999999" font-size="6.3" fill="#ccccdc" text-anchor="middle" font-weight="normal" stroke="#ccccdc" stroke-width="0.22">13:43</text><text x="297.9107142857143" y="720.1999999999999" font-size="6.3" fill="#ccccdc" text-anchor="middle" font-weight="normal" stroke="#ccccdc" stroke-width="0.22">13:44</text><text x="338.1428571428571" y="720.1999999999999" font-size="6.3" fill="#ccccdc" text-anchor="middle" font-weight="normal" stroke="#ccccdc" stroke-width="0.22">13:45</text><text x="378.375" y="720.1999999999999" font-size="6.3" fill="#ccccdc" text-anchor="middle" font-weight="normal" stroke="#ccccdc" stroke-width="0.22">13:46</text><text x="418.60714285714283" y="720.1999999999999" font-size="6.3" fill="#ccccdc" text-anchor="middle" font-weight="normal" stroke="#ccccdc" stroke-width="0.22">13:47</text><text x="458.83928571428567" y="720.1999999999999" font-size="6.3" fill="#ccccdc" text-anchor="middle" font-weight="normal" stroke="#ccccdc" stroke-width="0.22">13:48</text><text x="499.07142857142856" y="720.1999999999999" font-size="6.3" fill="#ccccdc" text-anchor="middle" font-weight="normal" stroke="#ccccdc" stroke-width="0.22">13:49</text><text x="539.3035714285713" y="720.1999999999999" font-size="6.3" fill="#ccccdc" text-anchor="middle" font-weight="normal" stroke="#ccccdc" stroke-width="0.22">13:50</text><text x="579.5357142857142" y="720.1999999999999" font-size="6.3" fill="#ccccdc" text-anchor="middle" font-weight="normal" stroke="#ccccdc" stroke-width="0.22">13:51</text><text x="619.7678571428571" y="720.1999999999999" font-size="6.3" fill="#ccccdc" text-anchor="middle" font-weight="normal" stroke="#ccccdc" stroke-width="0.22">13:52</text><text x="660.0" y="720.1999999999999" font-size="6.3" fill="#ccccdc" text-anchor="middle" font-weight="normal" stroke="#ccccdc" stroke-width="0.22">13:53</text><polyline points="61.25,710.7 660,710.7" fill="none" stroke="#e2be48" stroke-width="1.1"/><polyline points="61.25,709.2 80,709.3 96.75,709.9 137,709.4 217,709.3 298,709.3 320,709.8 338,709.6 380,709.3 500,709.3 539.5,709.8 579.5,709.3 660,709.2" fill="none" stroke="#6ec8c4" stroke-width="1.2"/><rect x="676.25" y="615.5" width="131.75" height="15.25" fill="#202228"/><text x="738.3" y="597.3" font-size="6.5" fill="#33b5e5" text-anchor="end" font-weight="bold" >max</text><text x="770.3" y="597.3" font-size="6.5" fill="#33b5e5" text-anchor="end" font-weight="bold" >avg</text><text x="802.05" y="597.3" font-size="6.5" fill="#33b5e5" text-anchor="end" font-weight="bold" >current</text><rect x="677.5" y="607.0" width="8" height="1.9" fill="#7eb26d"/><text x="691.25" y="610.3" font-size="6.3" fill="#ccccdc" text-anchor="start" font-weight="normal" stroke="#ccccdc" stroke-width="0.22">GPU 0</text><text x="743" y="610.3" font-size="6.5" fill="#ccccdc" text-anchor="end" font-weight="normal" stroke="#ccccdc" stroke-width="0.22">0%</text><text x="775" y="610.3" font-size="6.5" fill="#ccccdc" text-anchor="end" font-weight="normal" stroke="#ccccdc" stroke-width="0.22">0%</text><text x="806.75" y="610.3" font-size="6.5" fill="#ccccdc" text-anchor="end" font-weight="normal" stroke="#ccccdc" stroke-width="0.22">0%</text><rect x="677.5" y="622.25" width="8" height="1.9" fill="#eab839"/><text x="691.25" y="625.55" font-size="6.3" fill="#ccccdc" text-anchor="start" font-weight="normal" stroke="#ccccdc" stroke-width="0.22">GPU 0</text><text x="743" y="625.55" font-size="6.5" fill="#ccccdc" text-anchor="end" font-weight="normal" stroke="#ccccdc" stroke-width="0.22">0%</text><text x="775" y="625.55" font-size="6.5" fill="#ccccdc" text-anchor="end" font-weight="normal" stroke="#ccccdc" stroke-width="0.22">0%</text><text x="806.75" y="625.55" font-size="6.5" fill="#ccccdc" text-anchor="end" font-weight="normal" stroke="#ccccdc" stroke-width="0.22">0%</text><rect x="677.5" y="637.25" width="8" height="2.3" fill="#6ed0e0"/><text x="691.25" y="640.55" font-size="6.3" fill="#ccccdc" text-anchor="start" font-weight="normal" stroke="#ccccdc" stroke-width="0.22">GPU 0</text><text x="743" y="640.55" font-size="6.5" fill="#ccccdc" text-anchor="end" font-weight="normal" stroke="#ccccdc" stroke-width="0.22">0.987%</text><text x="775" y="640.55" font-size="6.5" fill="#ccccdc" text-anchor="end" font-weight="normal" stroke="#ccccdc" stroke-width="0.22">0.882%</text><text x="806.75" y="640.55" font-size="6.5" fill="#ccccdc" text-anchor="end" font-weight="normal" stroke="#ccccdc" stroke-width="0.22">0.987%</text><path d="M1313.55,209.67 A97.0,97.0 0 1 1 1498.05,209.67 L1476.84,202.78 A74.7,74.7 0 1 0 1334.76,202.78 Z" fill="#22252b"/><path d="M1313.55,209.67 A97.0,97.0 0 0 1 1450.49,93.61 L1440.21,113.40 A74.7,74.7 0 0 0 1334.76,202.78 Z" fill="#73bf69"/><path d="M1308.98,211.16 A101.8,101.8 0 0 1 1501.97,146.30 L1498.19,147.61 A97.8,97.8 0 0 0 1312.79,209.92 Z" fill="#73bf69"/><path d="M1501.97,146.30 A101.8,101.8 0 0 1 1505.75,160.37 L1501.82,161.13 A97.8,97.8 0 0 0 1498.19,147.61 Z" fill="#eab839"/><path d="M1505.75,160.37 A101.8,101.8 0 0 1 1502.62,211.16 L1498.81,209.92 A97.8,97.8 0 0 0 1501.82,161.13 Z" fill="#f2495c"/><text x="1405.8" y="197.8" font-size="29.5" fill="#73bf69" text-anchor="middle" font-weight="normal" textLength="98" lengthAdjust="spacingAndGlyphs" stroke="#73bf69" stroke-width="0.8">62.7 °C</text><path d="M1313.55,379.67 A97.0,97.0 0 1 1 1498.05,379.67 L1476.84,372.78 A74.7,74.7 0 1 0 1334.76,372.78 Z" fill="#22252b"/><path d="M1313.55,379.67 A97.0,97.0 0 1 1 1498.05,379.67 L1476.84,372.78 A74.7,74.7 0 1 0 1334.76,372.78 Z" fill="#f2495c"/><path d="M1308.98,381.16 A101.8,101.8 0 0 1 1488.27,290.02 L1485.03,292.36 A97.8,97.8 0 0 0 1312.79,379.92 Z" fill="#73bf69"/><path d="M1488.27,290.02 A101.8,101.8 0 0 1 1507.60,349.06 L1503.60,349.09 A97.8,97.8 0 0 0 1485.03,292.36 Z" fill="#eab839"/><path d="M1507.60,349.06 A101.8,101.8 0 0 1 1502.62,381.16 L1498.81,379.92 A97.8,97.8 0 0 0 1503.60,349.09 Z" fill="#f2495c"/><text x="1405.8" y="368" font-size="29.5" fill="#f2495c" text-anchor="middle" font-weight="normal" textLength="97" lengthAdjust="spacingAndGlyphs" stroke="#f2495c" stroke-width="0.8">11.8 kW</text><rect x="37.8" y="11.3" width="3.4" height="3.4" rx="0.5" fill="none" stroke="#a9abb3" stroke-width="1"/><rect x="42.0" y="11.3" width="3.4" height="3.4" rx="0.5" fill="none" stroke="#a9abb3" stroke-width="1"/><rect x="37.8" y="15.5" width="3.4" height="3.4" rx="0.5" fill="none" stroke="#a9abb3" stroke-width="1"/><rect x="42.0" y="15.5" width="3.4" height="3.4" rx="0.5" fill="none" stroke="#a9abb3" stroke-width="1"/><text x="51.1" y="17.4" font-size="9.9" fill="#ccccdc" text-anchor="start" font-weight="normal" textLength="34.7" lengthAdjust="spacingAndGlyphs">General</text><text x="90.2" y="17.4" font-size="9.9" fill="#d8d9e0" text-anchor="start" font-weight="normal" textLength="157.7" lengthAdjust="spacingAndGlyphs">/ NVIDIA DCGM Exporter Dashboard</text><polygon points="257.60,11.10 258.74,13.83 261.69,14.07 259.44,16.00 260.13,18.88 257.60,17.34 255.07,18.88 255.76,16.00 253.51,14.07 256.46,13.83" fill="none" stroke="#c7c8d0" stroke-width="0.9" stroke-linejoin="round"/><g stroke="#c7c8d0" stroke-width="1" fill="none"><circle cx="278.4" cy="12.5" r="1.3"/><circle cx="278.4" cy="17.5" r="1.3"/><circle cx="273.6" cy="15.0" r="1.3"/><line x1="274.8" y1="14.4" x2="277.2" y2="13.1"/><line x1="274.8" y1="15.6" x2="277.2" y2="16.9"/></g><rect x="37.8" y="30.5" width="35.3" height="17.4" rx="1.5" fill="#181b1f" stroke="#202227" stroke-width="1"/><text x="41.7" y="41.2" font-size="6.6" fill="#5f8fff" text-anchor="start" font-weight="normal" textLength="26.5" lengthAdjust="spacingAndGlyphs" stroke="#5f8fff" stroke-width="0.25">instance</text><rect x="76.0" y="30.5" width="89.30000000000001" height="17.4" rx="1.5" fill="#111217" stroke="#2a2c31" stroke-width="1"/><text x="80.9" y="42.2" font-size="8" fill="#d8d9e0" text-anchor="start" font-weight="normal" textLength="71.1" lengthAdjust="spacingAndGlyphs">10.233.125.69:9400</text><polyline points="156.3,38.4 157.6,39.7 158.9,38.4" fill="none" stroke="#c7c8d0" stroke-width="0.8"/><rect x="175.7" y="30.5" width="21.600000000000023" height="17.4" rx="1.5" fill="#181b1f" stroke="#202227" stroke-width="1"/><text x="180.9" y="41.2" font-size="6.6" fill="#5f8fff" text-anchor="start" font-weight="normal" textLength="11.4" lengthAdjust="spacingAndGlyphs" stroke="#5f8fff" stroke-width="0.25">gpu</text><rect x="200.7" y="30.5" width="26.700000000000017" height="17.4" rx="1.5" fill="#111217" stroke="#2a2c31" stroke-width="1"/><text x="205.3" y="42.2" font-size="8" fill="#d8d9e0" text-anchor="start" font-weight="normal" textLength="8.9" lengthAdjust="spacingAndGlyphs">All</text><polyline points="218.2,38.4 219.5,39.7 220.8,38.4" fill="none" stroke="#c7c8d0" stroke-width="0.8"/><rect x="1334.7" y="6.55" width="21.799999999999955" height="15.95" rx="1" fill="#181b1f" stroke="#222429" stroke-width="1"/><rect x="1362.8" y="6.55" width="18.40000000000009" height="15.95" rx="1" fill="#181b1f" stroke="#222429" stroke-width="1"/><rect x="1387.9" y="6.55" width="19.199999999999818" height="15.95" rx="1" fill="#181b1f" stroke="#222429" stroke-width="1"/><rect x="1413.5" y="6.55" width="115.09999999999991" height="15.95" rx="1" fill="#181b1f" stroke="#222429" stroke-width="1"/><line x1="1508.9" y1="6.5" x2="1508.9" y2="22.5" stroke="#222429"/><rect x="1534.0" y="6.55" width="38.200000000000045" height="15.95" rx="1" fill="#181b1f" stroke="#222429" stroke-width="1"/><line x1="1554.9" y1="6.5" x2="1554.9" y2="22.5" stroke="#222429"/><rect x="1578.5" y="6.55" width="18.90000000000009" height="15.95" rx="1" fill="#181b1f" stroke="#222429" stroke-width="1"/><g fill="#b9bac2"><rect x="1338.9" y="13.399999999999999" width="1.0" height="5.5"/><rect x="1340.9" y="11.899999999999999" width="1.0" height="7.0"/><rect x="1342.9" y="14.7" width="1.0" height="4.2"/><rect x="1344.9" y="16.099999999999998" width="1.0" height="2.8"/><rect x="1346.7" y="12.7" width="1.0" height="6.2"/></g><path d="M1349.7,12.2 v5.4 M1347,14.9 h5.4" stroke="#f5a623" stroke-width="1.8"/><g fill="none" stroke="#9c9ea6" stroke-width="1.1"><rect x="1368.5" y="11.3" width="7.4" height="7.3" rx="1.6"/><path d="M1370.5,11.4 v2.5 h3.4 v-2.5"/><path d="M1370.6,18.5 l1.6,-2 l1.6,2"/></g><g fill="none" stroke="#9c9ea6" stroke-width="1"><path d="M1393.2,14.9 l1.1,-3.3 h6.4 l1.1,3.3 l-1.1,3.3 h-6.4 z" stroke-linejoin="round"/><ellipse cx="1397.5" cy="14.9" rx="1.1" ry="1.7"/></g><g fill="none" stroke="#a9abb3" stroke-width="0.9"><circle cx="1422.5" cy="14.7" r="4.2"/><path d="M1422.5,12.6 v2.3 l-1.3,1.3"/></g><text x="1432.6" y="17.6" font-size="8" fill="#d8d9e0" text-anchor="start" font-weight="normal" textLength="56.7" lengthAdjust="spacingAndGlyphs">Last 15 minutes</text><polyline points="1497.9,13.4 1499.3,14.8 1500.7,13.4" fill="none" stroke="#c7c8d0" stroke-width="0.8"/><g fill="none" stroke="#a9abb3" stroke-width="0.9"><circle cx="1518.4" cy="14.2" r="3.6"/><path d="M1516.8,14.2 h3.2 M1521,16.9 l1.8,1.8"/></g><g fill="none" stroke="#a9abb3" stroke-width="0.95"><path d="M1540.6,13.6 a3.9,3.9 0 0 1 7.0,-1.3 M1547.8,15.8 a3.9,3.9 0 0 1 -7.0,1.3"/><path d="M1547.9,10.6 v2.1 h-2.1 M1540.5,18.8 v-2.1 h2.1"/></g><polyline points="1561.8,13.4 1563.2,14.8 1564.6,13.4" fill="none" stroke="#c7c8d0" stroke-width="0.8"/><g fill="none" stroke="#a9abb3" stroke-width="0.9"><rect x="1584.3" y="10.6" width="7.6" height="6.2" rx="0.8"/><path d="M1584.3,14.9 h7.6 M1586.4,18.6 h3.4"/></g><defs><linearGradient id="gl" x1="0" y1="1" x2="0" y2="0"><stop offset="0" stop-color="#fcd21a"/><stop offset="1" stop-color="#f05a28"/></linearGradient><linearGradient id="ab" x1="0" y1="0" x2="0" y2="1"><stop offset="0" stop-color="#f7931e"/><stop offset="1" stop-color="#e8442a"/></linearGradient></defs><polygon points="11.90,10.50 13.81,11.98 16.21,12.29 16.52,14.69 18.00,16.60 16.52,18.51 16.21,20.91 13.81,21.22 11.90,22.70 9.99,21.22 7.59,20.91 7.28,18.51 5.80,16.60 7.28,14.69 7.59,12.29 9.99,11.98" fill="url(#gl)" stroke="url(#gl)" stroke-width="1.2" stroke-linejoin="round"/><path d="M14.6,13.9 A3.3,3.3 0 1 0 15.3,17.9 A2.0,2.0 0 0 0 12.6,15.6" fill="none" stroke="#1b1a1c" stroke-width="1.5" stroke-linecap="round"/><circle cx="13.2" cy="17.1" r="0.85" fill="#1b1a1c"/><circle cx="26.6" cy="30.1" r="6.1" fill="#1d1f24" stroke="#2b2e34" stroke-width="1"/><polyline points="25.6,27.4 28.1,30.1 25.6,32.8" fill="none" stroke="#c9cad2" stroke-width="1.35" stroke-linecap="round" stroke-linejoin="round"/><g fill="none" stroke="#a9abb3" stroke-width="1"><circle cx="10.9" cy="42.6" r="4.3"/><line x1="14" y1="45.8" x2="16.6" y2="48.4"/></g><polygon points="11.50,65.20 12.93,68.63 16.64,68.93 13.81,71.35 14.67,74.97 11.50,73.03 8.33,74.97 9.19,71.35 6.36,68.93 10.07,68.63" fill="none" stroke="#a9abb3" stroke-width="1.0" stroke-linejoin="round"/><rect x="6.6" y="92.2" width="3.9" height="3.9" rx="0.7" fill="none" stroke="#c0c1c9" stroke-width="1.1"/><rect x="12.5" y="92.2" width="3.9" height="3.9" rx="0.7" fill="none" stroke="#c0c1c9" stroke-width="1.1"/><rect x="6.6" y="98.0" width="3.9" height="3.9" rx="0.7" fill="none" stroke="#c0c1c9" stroke-width="1.1"/><rect x="12.5" y="98.0" width="3.9" height="3.9" rx="0.7" fill="none" stroke="#c0c1c9" stroke-width="1.1"/><rect x="0" y="90.5" width="2.2" height="13.5" fill="url(#ab)"/><circle cx="11.5" cy="124.3" r="5.3" fill="none" stroke="#a9abb3" stroke-width="1.1"/><polygon points="14.1,121.7 12.5,125.1 8.9,126.9 10.5,123.5" fill="#a9abb3"/><circle cx="11.5" cy="124.3" r="0.6" fill="#181b1f"/><g fill="none" stroke="#a9abb3" stroke-width="1.05" stroke-linecap="round"><path d="M8.6,153.2 v-3.3 a2.9,2.9 0 0 1 5.8,0 v3.3"/><path d="M7.3,153.4 h8.4"/><path d="M10.7,155.6 h1.6"/><path d="M11.5,146.0 v0.6"/></g><polygon points="12.41,661.50 13.73,663.11 15.72,663.71 15.52,665.78 16.50,667.61 14.89,668.93 14.29,670.92 12.22,670.72 10.39,671.70 9.07,670.09 7.08,669.49 7.28,667.42 6.30,665.59 7.91,664.27 8.51,662.28 10.58,662.48" fill="none" stroke="#a9abb3" stroke-width="0.9" stroke-linejoin="round"/><circle cx="11.4" cy="666.6" r="1.4" fill="none" stroke="#a9abb3" stroke-width="0.9"/><path d="M11.5,688.3 l4.3,1.6 v3.6 q0,3.6 -4.3,5.6 q-4.3,-2 -4.3,-5.6 v-3.6 z" fill="none" stroke="#a9abb3" stroke-width="0.95" stroke-linejoin="round"/><circle cx="11.5" cy="720" r="6.4" fill="#5a8f2e"/><path d="M9.2,715.5 v3 h4.6 v-3 M8,720 h7 v3.5 h-7 z M10,719 v-1 h3 v1" fill="#f08a8a" stroke="#f08a8a" stroke-width="0.9"/></svg>
</body></html>
